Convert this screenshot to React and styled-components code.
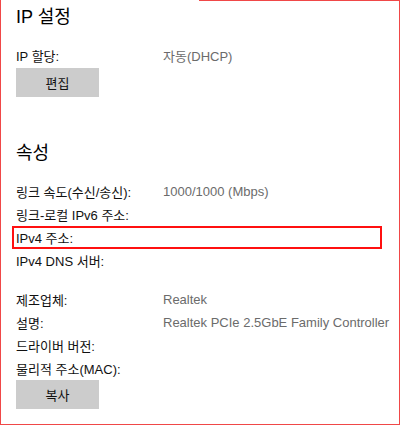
import React from 'react';
import styled, { createGlobalStyle } from 'styled-components';

const GlobalStyle = createGlobalStyle`
    html, body {
        margin: 0;
        padding: 0;
        background: #ffffff;
    }
    body {
        font-family: "Liberation Sans", "Noto Sans CJK KR", sans-serif;
    }
`

const Frame = styled.div`
    position: relative;
    box-sizing: border-box;
    width: 400px;
    height: 425px;
    border-left: 1px solid #f04848;
    border-right: 1px solid #f04848;
    border-bottom: 1px solid #f04848;
    padding: 3px 0 0 15px;
    overflow: hidden;

    &::before {
        content: "";
        position: absolute;
        top: 0;
        right: 0;
        width: 200px;
        height: 1px;
        background: #f04848;
    }
`

const Section = styled.section`
    display: flex;
    flex-direction: column;
    margin-top: ${p => p.gap || 0}px;
`

const Heading = styled.h2`
    margin: 0 0 13px 0;
    font-size: 18px;
    font-weight: 400;
    line-height: 28px;
    color: #000;
`

const Group = styled.div`
    display: flex;
    flex-direction: column;
    margin-top: ${p => p.gap || 0}px;
`

const Row = styled.div`
    position: relative;
    display: grid;
    grid-template-columns: 147px 1fr;
    height: 23px;
    align-items: center;
    font-size: 13px;

    ${p => p.highlight && `
        &::after {
            content: "";
            position: absolute;
            left: -4px;
            top: 0;
            width: 370px;
            height: 23px;
            box-sizing: border-box;
            border: 2px solid #ff1010;
        }
    `}
`

const Label = styled.span`
    color: #111;
    white-space: nowrap;
`

const Value = styled.span`
    color: #6b6b6b;
    white-space: nowrap;
`

const Button = styled.button`
    width: 83px;
    height: 29px;
    margin-top: ${p => p.gap || 0}px;
    border: none;
    background: #cccccc;
    color: #111;
    font-family: "Liberation Sans", "Noto Sans CJK KR", sans-serif;
    font-size: 13px;
    padding: 0;
`

const App = () => {
    return (
        <>
            <GlobalStyle />
            <Frame>
                <Section>
                    <Heading>IP 설정</Heading>
                    <Row>
                        <Label>IP 할당:</Label>
                        <Value>자동(DHCP)</Value>
                    </Row>
                    <div>
                        <Button gap={1}>편집</Button>
                    </div>
                </Section>
                <Section gap={42}>
                    <Heading>속성</Heading>
                    <Group>
                        <Row>
                            <Label>링크 속도(수신/송신):</Label>
                            <Value>1000/1000 (Mbps)</Value>
                        </Row>
                        <Row>
                            <Label>링크-로컬 IPv6 주소:</Label>
                            <Value></Value>
                        </Row>
                        <Row highlight>
                            <Label>IPv4 주소:</Label>
                            <Value></Value>
                        </Row>
                        <Row>
                            <Label>IPv4 DNS 서버:</Label>
                            <Value></Value>
                        </Row>
                    </Group>
                    <Group gap={16}>
                        <Row>
                            <Label>제조업체:</Label>
                            <Value>Realtek</Value>
                        </Row>
                        <Row>
                            <Label>설명:</Label>
                            <Value>Realtek PCIe 2.5GbE Family Controller</Value>
                        </Row>
                        <Row>
                            <Label>드라이버 버전:</Label>
                            <Value></Value>
                        </Row>
                        <Row>
                            <Label>물리적 주소(MAC):</Label>
                            <Value></Value>
                        </Row>
                    </Group>
                    <div>
                        <Button>복사</Button>
                    </div>
                </Section>
            </Frame>
        </>
    );
}

export default App;
